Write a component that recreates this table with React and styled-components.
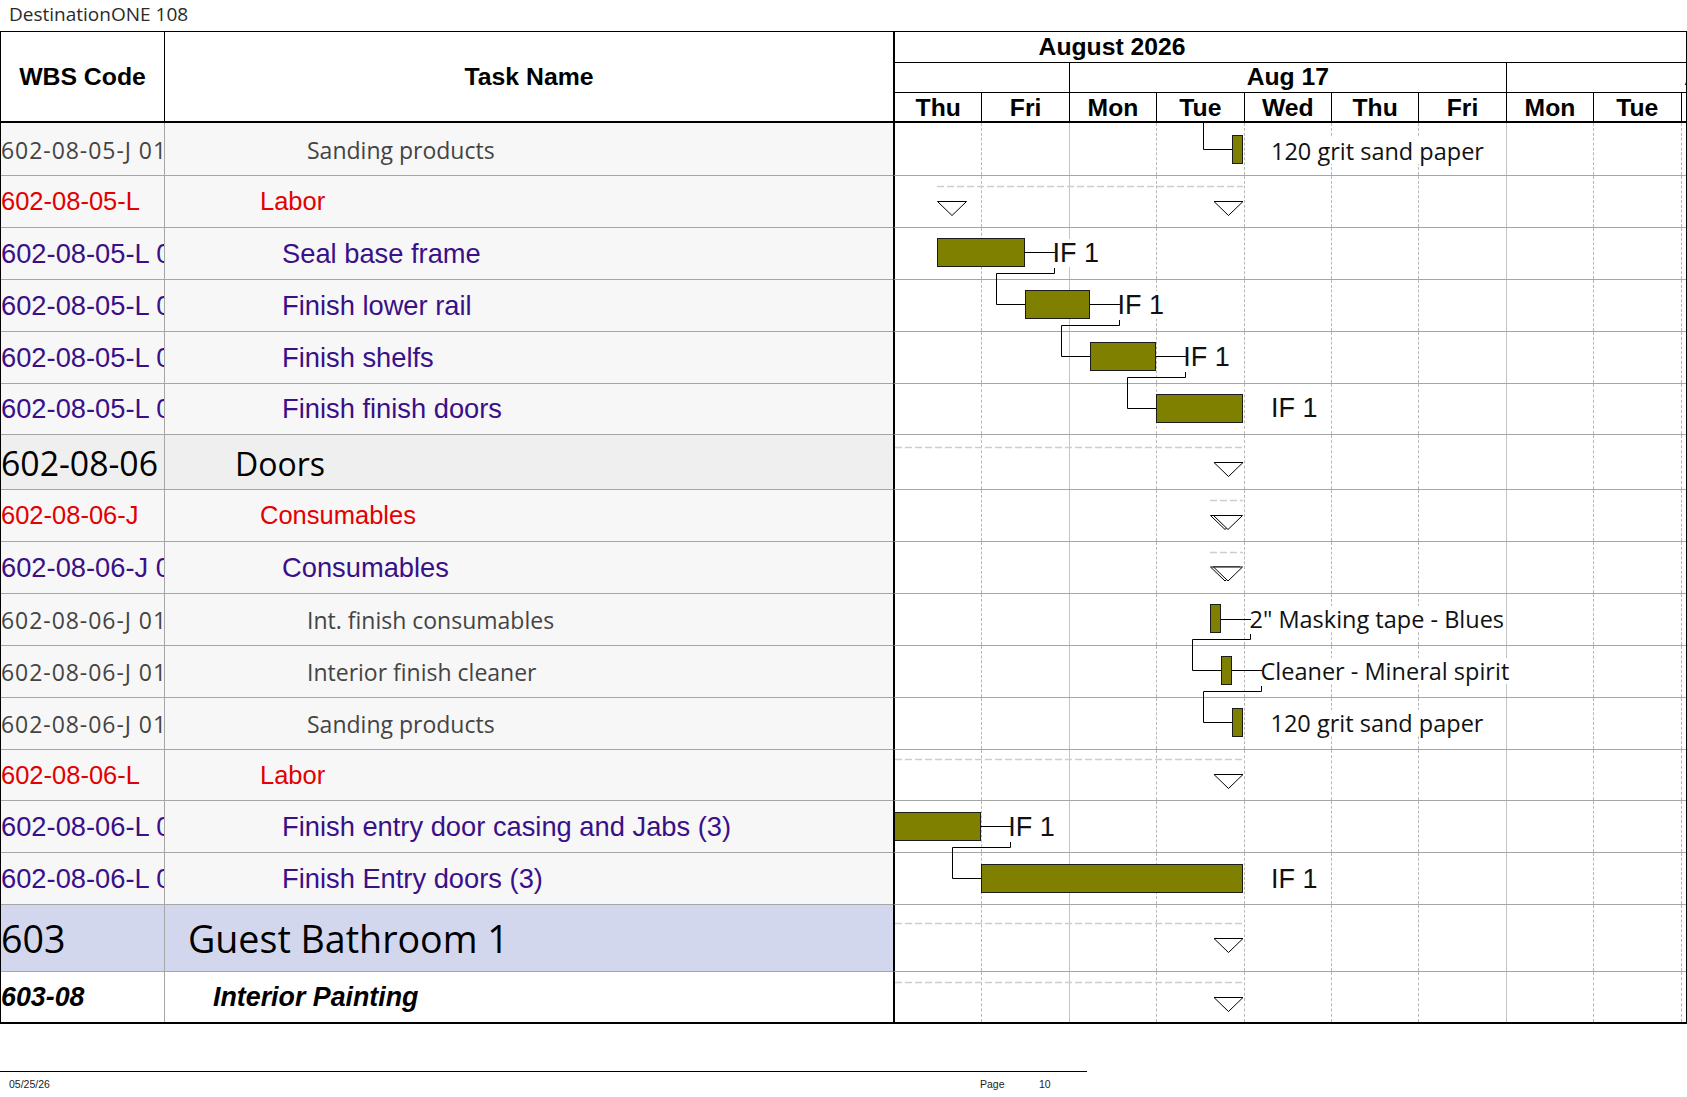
import React from 'react';
import styled, { createGlobalStyle, css } from 'styled-components';

const GlobalStyle = createGlobalStyle`
  html, body { margin: 0; padding: 0; background: #fff; }
  body { font-family: "Liberation Sans", Arial, sans-serif; }
  *, *::before, *::after { box-sizing: border-box; }
`;

const DAY_W = 87.4;
const CHART_X = 895;
const BODY_Y = 123;
const COLS = '164px 728px 793px';

const Page = styled.div`
  width: 1687px;
`;

const TitleBar = styled.div`
  height: 31px;
  padding-left: 9px;
  font-family: "Open Sans", sans-serif;
  font-size: 19px;
  line-height: 29px;
  color: #2a2a2a;
`;

const Table = styled.div`
  width: 1687px;
  border: 1px solid #000;
  border-bottom-width: 2px;
`;

const HeaderRow = styled.div`
  display: grid;
  grid-template-columns: ${COLS};
  height: 91px;
  border-bottom: 2px solid #000;
`;

const HeadCell = styled.div`
  display: flex;
  align-items: center;
  justify-content: center;
  font-family: "Liberation Sans", Arial, sans-serif;
  font-weight: bold;
  font-size: 24.8px;
  color: #000;
  border-right: ${p => (p.$divider ? '1px solid #000' : 'none')};
`;

const ChartHead = styled.div`
  display: flex;
  flex-direction: column;
  border-left: 2px solid #000;
  overflow: hidden;
`;

const MonthRow = styled.div`
  display: flex;
  height: 31px;
  border-bottom: 1px solid #000;
`;

const HeadText = styled.div`
  flex-shrink: 0;
  text-align: center;
  white-space: nowrap;
  font-family: "Liberation Sans", Arial, sans-serif;
  font-weight: bold;
  font-size: 24.7px;
  color: #000;
`;

const MonthLabel = styled(HeadText)`
  width: ${5 * DAY_W - 3}px;
  line-height: 29px;
`;

const WeekRow = styled.div`
  display: flex;
  height: 30px;
  border-bottom: 1px solid #000;
`;

const WeekCell = styled(HeadText)`
  width: ${p => p.$days * DAY_W}px;
  border-right: 1px solid #000;
  line-height: 28px;
`;

const WeekRest = styled.div`
  flex: 1;
  min-width: 0;
  overflow: hidden;
`;

const WeekRestLabel = styled(HeadText)`
  width: ${5 * DAY_W}px;
  line-height: 28px;
`;

const DayRow = styled.div`
  display: flex;
  height: 28px;
`;

const DayCell = styled(HeadText)`
  width: ${DAY_W}px;
  border-right: 1px solid #000;
  line-height: 29px;
`;

const DayRest = styled.div`
  flex: 1;
`;

const Body = styled.div`
  position: relative;
`;

const kindFont = {
  item: css`
    font-family: "Open Sans", sans-serif;
    font-size: 23px;
    color: #444;
    padding-top: 1px;
  `,
  group: css`
    font-family: "Liberation Sans", Arial, sans-serif;
    font-size: 25.5px;
    color: #e30000;
  `,
  task: css`
    font-family: "Liberation Sans", Arial, sans-serif;
    font-size: 27.3px;
    color: #3a1088;
  `,
  section: css`
    font-family: "Open Sans", sans-serif;
    font-size: 32px;
    color: #000;
    padding-top: 2px;
  `,
  area: css`
    font-family: "Open Sans", sans-serif;
    font-size: 37.6px;
    color: #000;
  `,
  phase: css`
    font-family: "Liberation Sans", Arial, sans-serif;
    font-size: 26.8px;
    font-weight: bold;
    font-style: italic;
    color: #000;
  `,
};

const kindBg = {
  item: '#f7f7f7',
  group: '#f7f7f7',
  task: '#f7f7f7',
  section: '#efefef',
  area: '#d2d7ee',
  phase: '#ffffff',
};

const kindIndent = {
  item: 142,
  group: 95,
  task: 117,
  section: 70,
  area: 23,
  phase: 48,
};

const Row = styled.div`
  display: grid;
  grid-template-columns: ${COLS};
  height: ${p => p.$h}px;
`;

const TextCell = styled.div`
  display: flex;
  align-items: center;
  overflow: hidden;
  white-space: nowrap;
  background: ${p => kindBg[p.$kind]};
  border-bottom: ${p => (p.$last ? 'none' : '1px solid #a6a6a6')};
  ${p => kindFont[p.$kind]}
`;

const WbsCell = styled(TextCell)`
  border-right: 1px solid #a6a6a6;
  letter-spacing: ${p => (p.$kind === 'item' ? '0.95px' : '0')};
  font-size: ${p => (p.$kind === 'section' ? '33.8px' : '')};
`;

const NameCell = styled(TextCell)`
  padding-left: ${p => kindIndent[p.$kind]}px;
`;

const ChartCell = styled.div`
  display: flex;
  background: #fff;
  border-left: 2px solid #000;
  border-bottom: ${p => (p.$last ? 'none' : '1px solid #a6a6a6')};
`;

const GridDay = styled.div`
  flex-shrink: 0;
  width: ${DAY_W}px;
  border-right: 1px ${p => (p.$solid ? 'solid #c4c4c4' : 'dashed #b8b8b8')};
`;

const GridRest = styled.div`
  flex: 1;
`;

const GanttLayer = styled.div`
  position: absolute;
  left: ${CHART_X - 1}px;
  top: 0;
  width: 791px;
  height: 899px;
  overflow: hidden;
  pointer-events: none;
`;

const GanttSvg = styled.svg`
  position: absolute;
  left: 0;
  top: 0;
`;

const Bar = styled.rect`
  fill: #808000;
  stroke: #1c1c1c;
  stroke-width: 1;
`;

const Link = styled.polyline`
  fill: none;
  stroke: #000;
  stroke-width: 1;
`;

const SummaryLine = styled.line`
  stroke: #cdcdcd;
  stroke-width: 1.5;
  stroke-dasharray: 7 3;
`;

const Milestone = styled.polygon`
  fill: #fff;
  stroke: #000;
  stroke-width: 1;
`;

const BarLabel = styled.span`
  position: absolute;
  white-space: nowrap;
  background: #fff;
  color: #111;
  ${p =>
    p.$variant === 'link'
      ? css`
          font-family: "Liberation Sans", Arial, sans-serif;
          font-size: 27px;
          line-height: 28px;
        `
      : css`
          font-family: "Open Sans", sans-serif;
          font-size: 23.5px;
          line-height: 26px;
        `}
`;

const Footer = styled.div`
  width: 1087px;
  margin-top: 47px;
  border-top: 1px solid #000;
  display: flex;
  padding-top: 6px;
  font-family: "Liberation Sans", Arial, sans-serif;
  font-size: 10.5px;
  line-height: 12px;
  color: #222;
`;

const FooterDate = styled.div`
  width: 980px;
  padding-left: 9px;
`;

const FooterPage = styled.div`
  width: 59px;
`;

const rows = [
  { h: 53, kind: 'item', wbs: '602-08-05-J 01 03', name: 'Sanding products' },
  { h: 52, kind: 'group', wbs: '602-08-05-L', name: 'Labor' },
  { h: 52, kind: 'task', wbs: '602-08-05-L 01', name: 'Seal base frame' },
  { h: 52, kind: 'task', wbs: '602-08-05-L 02', name: 'Finish lower rail' },
  { h: 52, kind: 'task', wbs: '602-08-05-L 03', name: 'Finish shelfs' },
  { h: 51, kind: 'task', wbs: '602-08-05-L 04', name: 'Finish finish doors' },
  { h: 55, kind: 'section', wbs: '602-08-06', name: 'Doors' },
  { h: 52, kind: 'group', wbs: '602-08-06-J', name: 'Consumables' },
  { h: 52, kind: 'task', wbs: '602-08-06-J 01', name: 'Consumables' },
  { h: 52, kind: 'item', wbs: '602-08-06-J 01 01', name: 'Int. finish consumables' },
  { h: 52, kind: 'item', wbs: '602-08-06-J 01 02', name: 'Interior finish cleaner' },
  { h: 52, kind: 'item', wbs: '602-08-06-J 01 03', name: 'Sanding products' },
  { h: 51, kind: 'group', wbs: '602-08-06-L', name: 'Labor' },
  { h: 52, kind: 'task', wbs: '602-08-06-L 01', name: 'Finish entry door casing and Jabs (3)' },
  { h: 52, kind: 'task', wbs: '602-08-06-L 02', name: 'Finish Entry doors (3)' },
  { h: 67, kind: 'area', wbs: '603', name: 'Guest Bathroom 1' },
  { h: 50, kind: 'phase', wbs: '603-08', name: 'Interior Painting', last: true },
];

const days = ['Thu', 'Fri', 'Mon', 'Tue', 'Wed', 'Thu', 'Fri', 'Mon', 'Tue'];

const bars = [
  [1232.5, 135.5, 10, 28],
  [937.5, 238.5, 87, 28],
  [1025.5, 290.5, 64, 28],
  [1090.5, 342.5, 65, 28],
  [1156.5, 394.5, 86, 28],
  [1210.5, 604.5, 10, 28],
  [1221.5, 656.5, 10, 28],
  [1232.5, 708.5, 10, 28],
  [894.5, 812.5, 86, 28],
  [981.5, 864.5, 261, 28],
];

const links = [
  '1203.5,123 1203.5,149.5 1232.5,149.5',
  '1024.5,252.5 1055,252.5',
  '1054.5,268 1054.5,273.5 996.5,273.5 996.5,304.5 1025.5,304.5',
  '1089.5,304.5 1120,304.5',
  '1119.5,320 1119.5,325.5 1061.5,325.5 1061.5,356.5 1090.5,356.5',
  '1155.5,356.5 1186,356.5',
  '1185.5,372 1185.5,377.5 1127.5,377.5 1127.5,408.5 1156.5,408.5',
  '1220.5,619.5 1251,619.5',
  '1250.5,634 1250.5,639.5 1192.5,639.5 1192.5,670.5 1221.5,670.5',
  '1231.5,670.5 1262,670.5',
  '1261.5,686 1261.5,691.5 1203.5,691.5 1203.5,722.5 1232.5,722.5',
  '980.5,826.5 1011,826.5',
  '1010.5,842 1010.5,847.5 952.5,847.5 952.5,878.5 981.5,878.5',
];

const summaries = [
  [937, 186.5],
  [895, 447.5],
  [1210, 500.5],
  [1210, 552.5],
  [895, 759.5],
  [895, 923.5],
  [895, 982.5],
];

const milestones = [
  [937.5, 201.5],
  [1214, 201.5],
  [1214, 462.5],
  [1214, 774.5],
  [1214, 938.5],
  [1214, 997.5],
];

const doubleMilestones = [515.5, 567];

const labels = [
  { x: 1271, base: 160, text: '120 grit sand paper', variant: 'note' },
  { x: 1052.5, base: 262.5, text: 'IF 1', variant: 'link' },
  { x: 1117.5, base: 314.5, text: 'IF 1', variant: 'link' },
  { x: 1183.2, base: 366.5, text: 'IF 1', variant: 'link' },
  { x: 1271, base: 417.5, text: 'IF 1', variant: 'link' },
  { x: 1249.5, base: 628.5, text: '2" Masking tape - Blues', variant: 'note' },
  { x: 1260.5, base: 680, text: 'Cleaner - Mineral spirit', variant: 'note' },
  { x: 1270.5, base: 732.5, text: '120 grit sand paper', variant: 'note' },
  { x: 1008.2, base: 836.5, text: 'IF 1', variant: 'link' },
  { x: 1271, base: 888, text: 'IF 1', variant: 'link' },
];

const tri = (x, y, w = 29, h = 14) => `${x},${y} ${x + w},${y} ${x + w / 2},${y + h}`;

function ChartGrid() {
  return (
    <>
      {days.map((d, i) => (
        <GridDay key={i} $solid={i === 1 || i === 6} />
      ))}
      <GridRest />
    </>
  );
}

function Gantt() {
  return (
    <GanttLayer>
      {labels.map((l, i) => (
        <BarLabel
          key={i}
          $variant={l.variant}
          style={{
            left: l.x - CHART_X,
            top: l.base - (l.variant === 'link' ? 23.4 : 22.1) - BODY_Y,
          }}
        >
          {l.text}
        </BarLabel>
      ))}
      <GanttSvg width="791" height="899" viewBox={`${CHART_X} ${BODY_Y} 791 899`}>
        {summaries.map(([x, y], i) => (
          <SummaryLine key={i} x1={x} y1={y} x2={1243} y2={y} />
        ))}
        {links.map((p, i) => (
          <Link key={i} points={p} />
        ))}
        {bars.map(([x, y, w, h], i) => (
          <Bar key={i} x={x} y={y} width={w} height={h} />
        ))}
        {milestones.map(([x, y], i) => (
          <Milestone key={i} points={tri(x, y)} />
        ))}
        {doubleMilestones.map((y, i) => (
          <g key={i}>
            <Milestone points={tri(1210.5, y)} />
            <Milestone points={tri(1213.5, y)} />
          </g>
        ))}
      </GanttSvg>
    </GanttLayer>
  );
}

export default function App() {
  return (
    <Page>
      <GlobalStyle />
      <TitleBar>DestinationONE 108</TitleBar>
      <Table>
        <HeaderRow>
          <HeadCell $divider>WBS Code</HeadCell>
          <HeadCell>Task Name</HeadCell>
          <ChartHead>
            <MonthRow>
              <MonthLabel>August 2026</MonthLabel>
            </MonthRow>
            <WeekRow>
              <WeekCell $days={2} />
              <WeekCell $days={5}>Aug 17</WeekCell>
              <WeekRest>
                <WeekRestLabel>Aug 24</WeekRestLabel>
              </WeekRest>
            </WeekRow>
            <DayRow>
              {days.map((d, i) => (
                <DayCell key={i}>{d}</DayCell>
              ))}
              <DayRest />
            </DayRow>
          </ChartHead>
        </HeaderRow>
        <Body>
          {rows.map((r, i) => (
            <Row key={i} $h={r.h}>
              <WbsCell $kind={r.kind} $last={r.last}>{r.wbs}</WbsCell>
              <NameCell $kind={r.kind} $last={r.last}>{r.name}</NameCell>
              <ChartCell $last={r.last}>
                <ChartGrid />
              </ChartCell>
            </Row>
          ))}
          <Gantt />
        </Body>
      </Table>
      <Footer>
        <FooterDate>05/25/26</FooterDate>
        <FooterPage>Page</FooterPage>
        <div>10</div>
      </Footer>
    </Page>
  );
}
